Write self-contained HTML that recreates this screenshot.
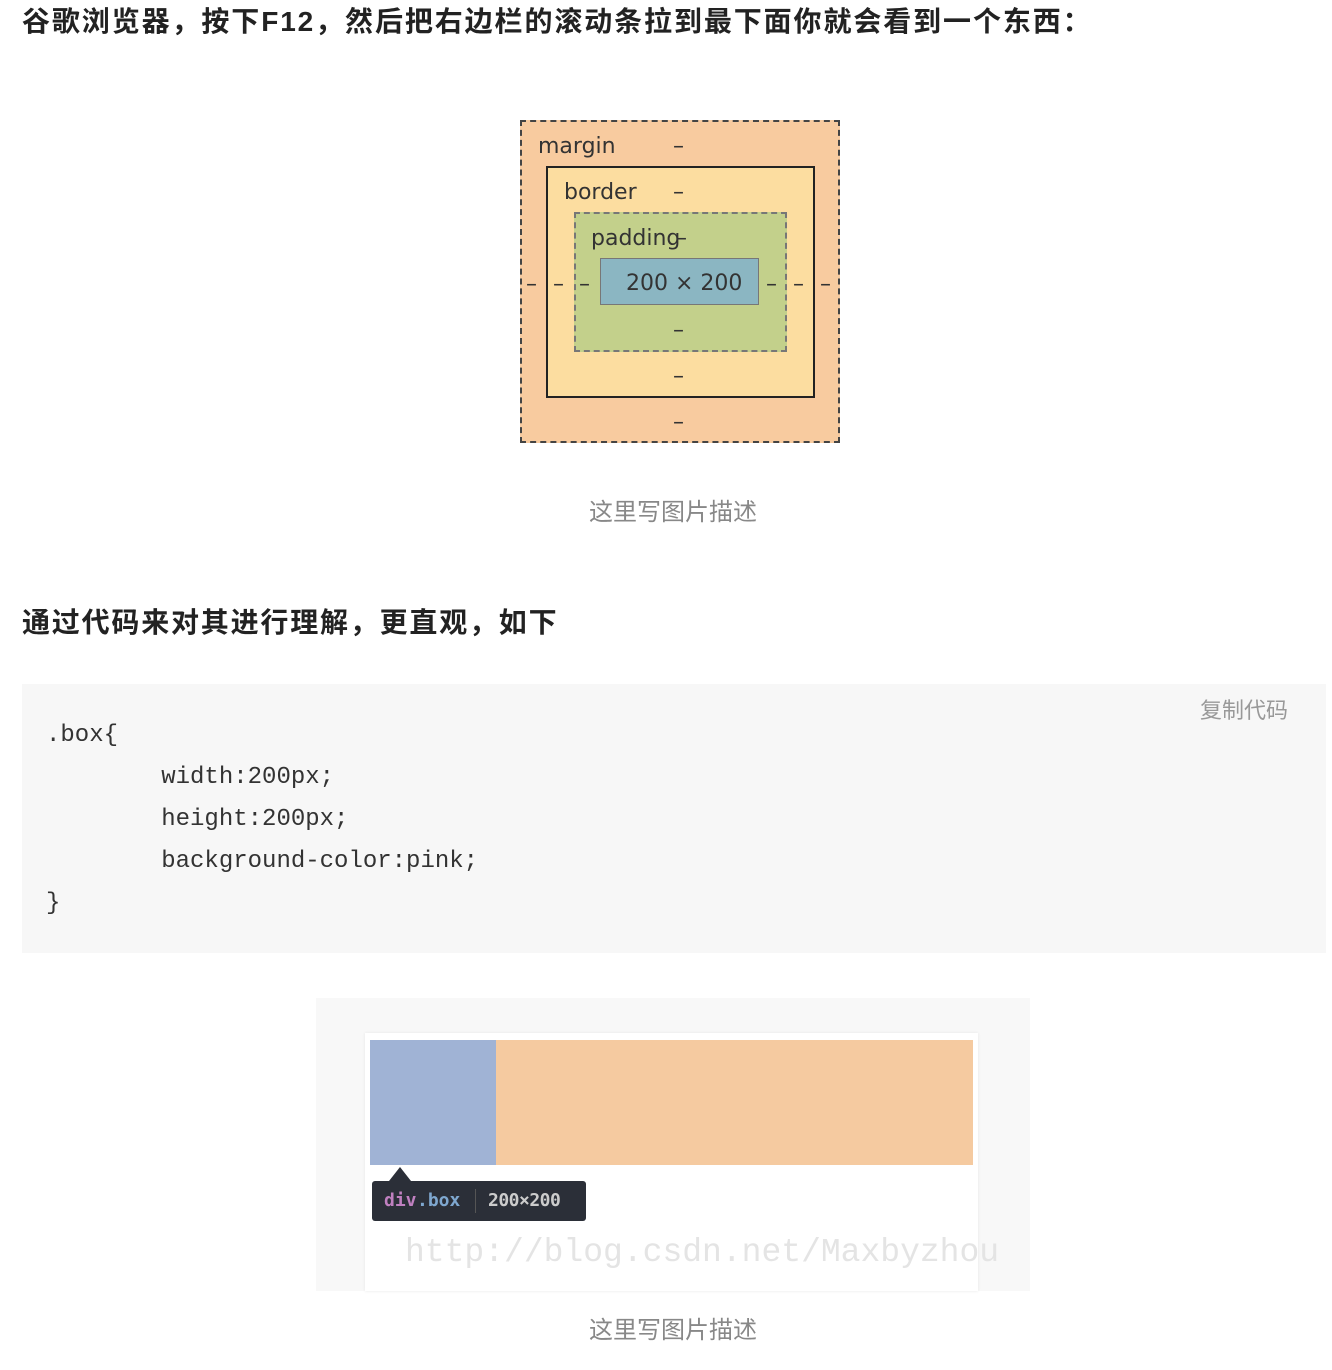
<!DOCTYPE html>
<html><head><meta charset="utf-8"><style>
body{margin:0;width:1332px;height:1370px;background:#fff;position:relative;overflow:hidden;font-family:"Liberation Sans","Noto Sans CJK SC",sans-serif;}
.a{position:absolute;}
h{position:absolute;font-weight:bold;font-size:28px;letter-spacing:1.9px;color:#222;white-space:nowrap;line-height:1;}
.cap{position:absolute;left:0;width:1346px;text-align:center;font-size:24px;color:#888;}
.code{position:absolute;left:22px;top:684px;width:1304px;height:269px;background:#f7f7f7;}
.code pre{margin:0;position:absolute;left:24px;top:31px;font-family:"Liberation Mono",monospace;font-size:24px;line-height:42px;color:#333;}
.bm{font-family:"DejaVu Sans","Liberation Sans",sans-serif;font-size:22px;color:#333;position:absolute;line-height:1;}
</style></head><body>
<h style="left:22px;top:8px">谷歌浏览器，按下F12，然后把右边栏的滚动条拉到最下面你就会看到一个东西：</h>

<div class="a" style="left:520px;top:120px;width:316px;height:319px;background:#f8cb9f;border:2px dashed #444;"></div>
<div class="a" style="left:546px;top:166px;width:265px;height:228px;background:#fcdda0;border:2px solid #222;"></div>
<div class="a" style="left:574px;top:212px;width:209px;height:136px;background:#c3d08b;border:2px dashed #777;"></div>
<div class="a" style="left:600px;top:258px;width:157px;height:45px;background:#8bb6c2;border:1px solid #777;"></div>
<div class="bm" style="left:538px;top:136px">margin</div>
<div class="bm" style="left:564px;top:182px">border</div>
<div class="bm" style="left:591px;top:228px">padding</div>
<div class="bm" style="left:626px;top:273px">200 × 200</div>
<div class="bm" style="left:673px;top:136px">–</div>
<div class="bm" style="left:673px;top:182px">–</div>
<div class="bm" style="left:676px;top:228px">–</div>
<div class="bm" style="left:673px;top:320px">–</div>
<div class="bm" style="left:673px;top:366px">–</div>
<div class="bm" style="left:673px;top:412px">–</div>
<div class="bm" style="left:526px;top:274px">–</div>
<div class="bm" style="left:553px;top:274px">–</div>
<div class="bm" style="left:579px;top:274px">–</div>
<div class="bm" style="left:766px;top:274px">–</div>
<div class="bm" style="left:793px;top:274px">–</div>
<div class="bm" style="left:820px;top:274px">–</div>

<div class="cap" style="top:492px">这里写图片描述</div>

<h style="left:22px;top:609px;letter-spacing:1.8px">通过代码来对其进行理解，更直观，如下</h>

<div class="code"><pre>.box{
        width:200px;
        height:200px;
        background-color:pink;
}</pre>
<div class="a" style="left:1178px;top:9px;font-size:22px;color:#999;">复制代码</div></div>

<div class="a" style="left:316px;top:998px;width:714px;height:293px;background:#f8f8f8;"></div>
<div class="a" style="left:365px;top:1033px;width:613px;height:258px;background:#fff;box-shadow:0 0 3px #e6e6e6;"></div>
<div class="a" style="left:370px;top:1040px;width:126px;height:125px;background:#a0b3d5;"></div>
<div class="a" style="left:496px;top:1040px;width:477px;height:125px;background:#f5caa0;"></div>
<div class="a" style="left:389px;top:1167px;width:0;height:0;border-left:11px solid transparent;border-right:11px solid transparent;border-bottom:14px solid #2b2f38;"></div>
<div class="a" style="left:372px;top:1181px;width:214px;height:40px;background:#2b2f38;border-radius:3px;font-family:'DejaVu Sans Mono',monospace;font-size:18px;font-weight:bold;line-height:40px;">
<span style="position:absolute;left:12px;color:#c080c0">div</span><span style="position:absolute;left:45px;color:#7fa8d0">.box</span>
<span style="position:absolute;left:103px;top:8px;width:1px;height:24px;background:#555"></span>
<span style="position:absolute;left:116px;color:#ccc;letter-spacing:-0.5px">200×200</span></div>
<div class="a" style="left:405px;top:1234px;font-family:'Liberation Mono',monospace;font-size:33px;color:#e4e4e4;white-space:nowrap;">http://blog.csdn.net/Maxbyzhou</div>

<div class="cap" style="top:1310px">这里写图片描述</div>
</body></html>
